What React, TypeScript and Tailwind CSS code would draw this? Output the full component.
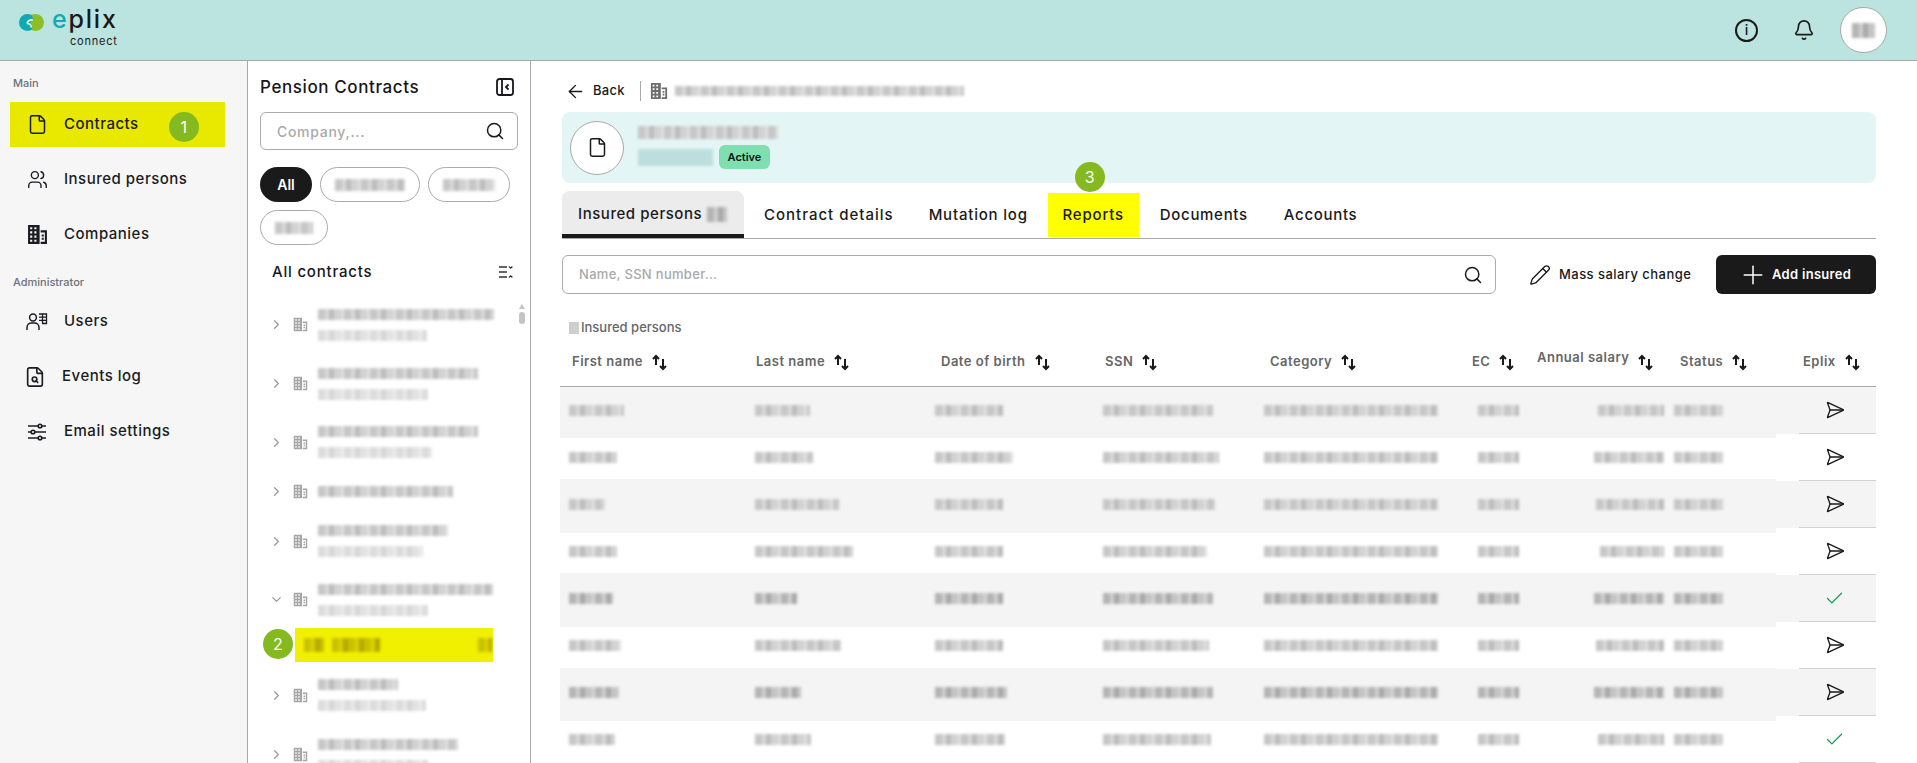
import {
  ArrowLeft,
  Bell,
  Check,
  ChevronDown,
  ChevronRight,
  File,
  FileSearch,
  Pencil,
  Plus,
  Search,
  SendHorizontal,
  Users,
} from "lucide-react";

const FONT = "font-['Inter','Noto_Sans',sans-serif]";

// the reference hides names and numbers behind a mosaic, these bars stand in for it
const MOSAIC =
  "bg-[repeating-linear-gradient(90deg,#c6c6c6_0_7px,#d9d9d9_7px_11px,#bcbcbc_11px_16px,#d2d2d2_16px_23px,#e0e0e0_23px_26px)]";
const MOSAIC_LIGHT =
  "bg-[repeating-linear-gradient(90deg,#dcdcdc_0_7px,#e8e8e8_7px_11px,#d6d6d6_11px_16px,#e2e2e2_16px_23px,#ededed_23px_26px)]";
const MOSAIC_DARK =
  "bg-[repeating-linear-gradient(90deg,#b4b4b4_0_7px,#cfcfcf_7px_11px,#a8a8a8_11px_16px,#c4c4c4_16px_23px,#d6d6d6_23px_26px)]";
const MOSAIC_YELLOW =
  "bg-[repeating-linear-gradient(90deg,#c9bf00_0_6px,#d8d000_6px_11px,#b5a900_11px_16px)]";

function Blur({ w, h = 11, color = MOSAIC }: { w: number; h?: number; color?: string }) {
  return <span className={`block blur-[1.5px] ${color}`} style={{ width: w, height: h }} />;
}

function Marker({ n }: { n: number }) {
  return (
    <span className="flex h-[30px] w-[30px] items-center justify-center rounded-full bg-[#84b91f] text-[16px] font-normal tracking-normal text-white">
      {n}
    </span>
  );
}

function BuildingIcon({ className }: { className?: string }) {
  return (
    <svg viewBox="0 0 20 20" className={className} fill="currentColor">
      <path
        fillRule="evenodd"
        d="M1 1h11v18H1V1zm2 2v2h2V3H3zm4 0v2h2V3H7zM3 7v2h2V7H3zm4 0v2h2V7H7zm-4 4v2h2v-2H3zm4 0v2h2v-2H7zm-4 4v2h2v-2H3zm4 0v2h2v-2H7zM13 6h6v13h-6v-2h4V8h-4V6zm1 4h2v2h-2v-2zm0 3h2v2h-2v-2z"
      />
    </svg>
  );
}

function UsersAdminIcon() {
  return (
    <svg viewBox="0 0 22 18" className="h-[19px] w-[22px]" fill="none" stroke="currentColor" strokeWidth="1.5">
      <circle cx="7" cy="5" r="3.4" />
      <path d="M1 17.5v-2.5c0-2.6 2-4.4 4.5-4.4h3c2.5 0 4.5 1.8 4.5 4.4v2.5" />
      <path d="M13 1.5h7.5V11H16M13 4.7h7.5M13 7.9h7.5M16.5 1.5V11" strokeWidth="1.3" />
    </svg>
  );
}

function SlidersIcon() {
  return (
    <svg viewBox="0 0 18 18" className="h-[18px] w-[18px]" fill="none" stroke="currentColor" strokeWidth="1.6">
      <path d="M0 3h18M0 9h18M0 15h18" />
      <circle cx="12" cy="3" r="1.8" fill="#f6f6f6" />
      <circle cx="5" cy="9" r="1.8" fill="#f6f6f6" />
      <circle cx="12" cy="15" r="1.8" fill="#f6f6f6" />
    </svg>
  );
}

function SortIcon() {
  return (
    <svg viewBox="0 0 17 17" className="h-[17px] w-[17px] shrink-0 text-[#1a1a1a]" fill="none" stroke="currentColor" strokeWidth="2">
      <path d="M5 11V2M2 5l3-3 3 3" />
      <path d="M12 5v10M9 12l3 3 3-3" />
    </svg>
  );
}

function NavLabel({ children, className }: { children: string; className?: string }) {
  return <div className={`h-4 pl-[13px] text-[11px] font-medium leading-4 text-[#6f7178] ${className}`}>{children}</div>;
}

function NavRow({
  icon,
  label,
  shifted,
  active,
}: {
  icon: React.ReactNode;
  label: string;
  shifted?: boolean;
  active?: boolean;
}) {
  return (
    <div className="flex h-[55px] items-center pl-[10px]">
      <div className={`flex h-[45px] w-[215px] items-center ${shifted ? "pl-[13px]" : "pl-[15px]"} ${active ? "bg-[#e9e900]" : ""}`}>
        <span className="flex w-[24px] justify-center text-[#1b1b22]">{icon}</span>
        <span className="ml-[15px] text-[15px] font-medium tracking-[0.5px] text-[#1b1b22]">{label}</span>
        {active && (
          <span className="ml-[30px] mt-[4px]">
            <Marker n={1} />
          </span>
        )}
      </div>
    </div>
  );
}

function Sidebar() {
  return (
    <aside className="w-[248px] shrink-0 border-r border-[#a8a8a8] bg-[#f6f6f6] pt-[14px]">
      <NavLabel className="mb-[6px]">Main</NavLabel>
      <NavRow active icon={<File className="h-[21px] w-[21px]" strokeWidth={1.7} />} label="Contracts" />
      <NavRow icon={<Users className="h-[21px] w-[21px]" strokeWidth={1.6} />} label="Insured persons" />
      <NavRow icon={<BuildingIcon className="h-[21px] w-[21px]" />} label="Companies" />
      <NavLabel className="mt-[12px] mb-[4px]">Administrator</NavLabel>
      <NavRow icon={<UsersAdminIcon />} label="Users" />
      <NavRow shifted icon={<FileSearch className="h-[22px] w-[22px]" strokeWidth={1.8} />} label="Events log" />
      <NavRow icon={<SlidersIcon />} label="Email settings" />
    </aside>
  );
}

const CONTRACTS = [
  { h: 59, a: 176, b: 109 },
  { h: 59, a: 160, b: 110 },
  { h: 58, a: 160, b: 114 },
  { h: 40, a: 135 },
  { h: 60, a: 130, b: 105 },
  { h: 57, a: 175, b: 110, open: true },
];

function ContractRow({ h, a, b, open }: { h: number; a: number; b?: number; open?: boolean }) {
  return (
    <div className="flex shrink-0 items-center" style={{ height: h }}>
      <span className="flex w-[33px] justify-center text-[#9a9a9a]">
        {open ? <ChevronDown className="h-[15px] w-[15px]" /> : <ChevronRight className="h-[15px] w-[15px]" />}
      </span>
      <BuildingIcon className="h-[15px] w-[15px] text-[#a6a6a6]" />
      <div className="ml-[10px] flex flex-col gap-[10px]">
        <Blur w={a} />
        {b && <Blur w={b} color={MOSAIC_LIGHT} />}
      </div>
    </div>
  );
}

function Chip({ w }: { w: number }) {
  return (
    <span className="flex h-[35px] items-center justify-center rounded-full border border-[#ababab] bg-white px-[14px]">
      <Blur w={w} h={12} />
    </span>
  );
}

function ContractsPanel() {
  return (
    <section className="relative w-[283px] shrink-0 overflow-hidden border-r border-[#a8a8a8] bg-white pl-[12px] pr-[12px] pt-[15px]">
      <div className="flex items-center justify-between pr-[4px]">
        <h2 className="text-[17px] font-medium leading-[22px] tracking-[0.6px] text-[#16161c]">Pension Contracts</h2>
        <svg viewBox="0 0 18 18" className="h-[18px] w-[18px] text-[#16161c]" fill="none" stroke="currentColor" strokeWidth="1.8">
          <rect x="1" y="1" width="16" height="16" rx="2.5" />
          <path d="M6 1v16M12.5 6.5L10 9l2.5 2.5" />
        </svg>
      </div>
      <div className="mt-[14px] flex h-[38px] items-center justify-between rounded-[6px] border border-[#ababab] pl-[16px] pr-[12px]">
        <span className="text-[14px] font-medium tracking-[0.7px] text-[#a9a9a9]">Company,...</span>
        <Search className="h-[20px] w-[20px] text-[#1a1a1a]" strokeWidth={1.8} />
      </div>
      <div className="mt-[17px] flex flex-wrap gap-x-[8px] gap-y-[8px]">
        <span className="flex h-[35px] w-[52px] items-center justify-center rounded-full bg-[#1a1a1a] text-[14px] font-semibold text-white">
          All
        </span>
        <Chip w={70} />
        <Chip w={52} />
        <Chip w={38} />
      </div>
      <div className="mt-[16px] flex h-[22px] items-center justify-between pl-[12px] pr-[4px]">
        <span className="text-[15px] font-medium tracking-[0.8px] text-[#16161c]">All contracts</span>
        <svg viewBox="0 0 16 14" className="h-[14px] w-[16px] text-[#333]" fill="none" stroke="currentColor" strokeWidth="1.3">
          <path d="M1 2h8M1 7h8M1 12h8M11 1.5l1.7 1.7 1.7-1.7M11 12.5l1.7-1.7 1.7 1.7" />
        </svg>
      </div>
      <div className="mt-[12px] flex flex-col">
        {CONTRACTS.map((c, i) => (
          <ContractRow key={i} {...c} />
        ))}
        <div className="relative ml-[35px] flex h-[34px] w-[198px] shrink-0 items-center bg-[#f0f000] pl-[9px]">
          <Blur w={20} h={14} color={MOSAIC_YELLOW} />
          <span className="ml-[8px]">
            <Blur w={48} h={14} color={MOSAIC_YELLOW} />
          </span>
          <span className="absolute right-[1px]">
            <Blur w={14} h={14} color={MOSAIC_YELLOW} />
          </span>
          <span className="absolute left-[-32px] top-[1px]">
            <Marker n={2} />
          </span>
        </div>
        <div className="h-[3px] shrink-0" />
        <ContractRow h={60} a={80} b={108} />
        <ContractRow h={59} a={140} b={110} />
      </div>
      <div className="absolute right-[5px] top-[243px] flex w-[7px] flex-col items-center gap-[3px]">
        <span className="h-0 w-0 border-x-[3.5px] border-b-[5px] border-x-transparent border-b-[#c4c4c4]" />
        <span className="h-[12px] w-[6px] rounded-full bg-[#c4c4c4]" />
      </div>
    </section>
  );
}

const COLS = "grid-cols-[186px_180px_168px_161px_185px_90px_140px_129px_77px]";

const HEADERS = [
  { label: "First name", pl: "pl-[12px]" },
  { label: "Last name", pl: "pl-[10px]" },
  { label: "Date of birth", pl: "pl-[15px]" },
  { label: "SSN", pl: "pl-[11px]" },
  { label: "Category", pl: "pl-[15px]" },
  { label: "EC", pl: "pl-[32px]" },
  { label: "Annual salary", pl: "pl-[7px]", raised: true },
  { label: "Status", pl: "pl-[10px]" },
  { label: "Eplix", pl: "pl-[4px]" },
];

const ROWS = [
  { first: 55, last: 55, dob: 68, ssn: 110, salary: 66, done: false },
  { first: 48, last: 58, dob: 78, ssn: 116, salary: 70, done: false },
  { first: 36, last: 84, dob: 68, ssn: 112, salary: 68, done: false },
  { first: 48, last: 98, dob: 68, ssn: 104, salary: 64, done: false },
  { first: 44, last: 42, dob: 68, ssn: 110, salary: 70, done: true },
  { first: 52, last: 86, dob: 68, ssn: 106, salary: 68, done: false },
  { first: 50, last: 46, dob: 72, ssn: 110, salary: 70, done: false },
  { first: 46, last: 56, dob: 70, ssn: 108, salary: 66, done: true },
];

const STRIPE_SHADOWS = [
  "shadow-[0_4px_0_#f4f4f4]",
  "",
  "shadow-[0_5px_0_#f4f4f4,0_-2px_0_#f4f4f4]",
  "",
  "shadow-[0_5px_0_#f4f4f4,0_-2px_0_#f4f4f4]",
  "",
  "shadow-[0_5px_0_#f4f4f4,0_-1px_0_#f4f4f4]",
  "",
];

function TableRow({ row, index }: { row: (typeof ROWS)[number]; index: number }) {
  const odd = index % 2 === 0;
  const tone = index === 4 || index === 6 ? MOSAIC_DARK : MOSAIC;
  return (
    <div className={`relative h-[47px] ${odd ? "bg-[#f4f4f4]" : ""}`}>
      <div className={`absolute inset-y-0 left-0 w-[1216px] ${odd ? "bg-[#f4f4f4]" : ""} ${STRIPE_SHADOWS[index]}`} />
      <div className={`relative grid h-full items-center ${COLS}`}>
        <div className="pl-[9px]">
          <Blur w={row.first} color={tone} />
        </div>
        <div className="pl-[9px]">
          <Blur w={row.last} color={tone} />
        </div>
        <div className="pl-[9px]">
          <Blur w={row.dob} color={tone} />
        </div>
        <div className="pl-[9px]">
          <Blur w={row.ssn} color={tone} />
        </div>
        <div className="pl-[9px]">
          <Blur w={174} color={tone} />
        </div>
        <div className="pl-[38px]">
          <Blur w={41} color={tone} />
        </div>
        <div className="flex justify-end pr-[6px]">
          <Blur w={row.salary} color={tone} />
        </div>
        <div className="pl-[4px]">
          <Blur w={49} color={tone} />
        </div>
        <div className="flex h-full items-center justify-center border-b border-[#d0d0d0] pr-[6px]">
          {row.done ? (
            <Check className="h-[21px] w-[21px] text-[#10a05a]" strokeWidth={1.5} />
          ) : (
            <SendHorizontal className="h-[20px] w-[20px] text-[#1a1a1a]" strokeWidth={1.6} />
          )}
        </div>
      </div>
    </div>
  );
}

function MainPanel() {
  return (
    <main className="min-w-0 flex-1 pl-[31px] pr-[41px]">
      <div className="flex h-[51px] items-center pl-[3px] pt-[9px]">
        <ArrowLeft className="h-[21px] w-[21px] text-[#1a1a1a]" strokeWidth={1.6} />
        <span className="ml-[7px] text-[13px] font-medium tracking-[0.3px] text-[#1a1a1a]">Back</span>
        <span className="ml-[15px] h-[20px] w-px bg-[#a8a8a8]" />
        <BuildingIcon className="ml-[9px] h-[18px] w-[18px] text-[#6d6d6d]" />
        <span className="ml-[7px]">
          <Blur w={289} h={10} />
        </span>
      </div>
      <div className="flex h-[71px] items-center rounded-[8px] bg-[#e3f6f5] pl-[8px]">
        <span className="flex h-[54px] w-[54px] items-center justify-center rounded-full border border-[#a8a8a8] bg-white">
          <File className="h-[21px] w-[21px] text-[#1a1a1a]" strokeWidth={1.7} />
        </span>
        <div className="ml-[14px] flex flex-col gap-[6px]">
          <Blur w={140} h={13} />
          <div className="flex items-center gap-[6px]">
            <Blur w={75} h={17} color="bg-[#bcdedc]" />
            <span className="flex h-[24px] w-[51px] items-center justify-center rounded-[6px] bg-[#7fdfb0] text-[11px] font-semibold text-[#111]">
              Active
            </span>
          </div>
        </div>
      </div>
      <div className="mt-[8px] flex h-[48px] items-stretch border-b border-[#a8a8a8] text-[15px] font-medium tracking-[0.8px] text-[#1a1a1a]">
        <div className="flex h-[47px] w-[182px] items-center rounded-t-[8px] border-b-4 border-[#1a1a1a] bg-[#ececec] pl-[16px] pt-[4px] tracking-[0.55px]">
          Insured persons
          <span className="ml-[5px]">
            <Blur w={20} h={15} color={MOSAIC_DARK} />
          </span>
        </div>
        <div className="ml-[20px] flex items-center gap-[35px] pt-[2px]">
          <span className="tracking-[1px]">Contract details</span>
          <span>Mutation log</span>
        </div>
        <div className="relative ml-[20px] mt-[2px] flex h-[44px] w-[91px] items-center justify-center bg-[#ffff00]">
          Reports
          <span className="absolute left-[27px] top-[-31px]">
            <Marker n={3} />
          </span>
        </div>
        <div className="ml-[21px] flex items-center gap-[36px] pt-[2px] tracking-[0.7px]">
          <span>Documents</span>
          <span>Accounts</span>
        </div>
      </div>
      <div className="mt-[16px] flex h-[39px] items-center">
        <div className="flex h-full w-[934px] items-center justify-between rounded-[6px] border border-[#ababab] pl-[16px] pr-[12px]">
          <span className="text-[13px] font-medium tracking-[0.3px] text-[#a9a9a9]">Name, SSN number...</span>
          <Search className="h-[20px] w-[20px] text-[#1a1a1a]" strokeWidth={1.8} />
        </div>
        <Pencil className="ml-[33px] h-[22px] w-[22px] text-[#1a1a1a]" strokeWidth={1.5} />
        <span className="ml-[8px] text-[13px] font-medium tracking-[0.45px] text-[#1a1a1a]">Mass salary change</span>
        <button className="ml-auto flex h-full w-[160px] items-center rounded-[6px] bg-[#1a1a1a] pl-[22px] text-[13px] font-semibold tracking-[0.3px] text-white">
          <Plus className="h-[30px] w-[30px]" strokeWidth={1.2} />
          <span className="ml-[4px]">Add insured</span>
        </button>
      </div>
      <div className="mt-[26px] flex h-[16px] items-center pl-[7px] text-[13px] font-medium text-[#666]">
        <span className="mr-[2px] h-[12px] w-[10px] bg-[#cfcfcf]" />
        Insured persons
      </div>
      <div className="ml-[-2px]">
        <div className={`grid h-[51px] items-center border-b border-[#a8a8a8] pt-[2px] ${COLS}`}>
          {HEADERS.map((h) => (
            <div key={h.label} className={`flex items-center gap-[8px] ${h.pl}`}>
              <span
                className={`whitespace-nowrap text-[13px] font-semibold tracking-[0.5px] text-[#666] ${h.raised ? "mt-[-8px]" : ""}`}
              >
                {h.label}
              </span>
              <SortIcon />
            </div>
          ))}
        </div>
        {ROWS.map((row, i) => (
          <TableRow key={i} row={row} index={i} />
        ))}
      </div>
    </main>
  );
}

export default function App() {
  return (
    <div className={`flex h-screen flex-col overflow-hidden bg-white ${FONT}`}>
      <header className="flex h-[61px] shrink-0 items-center border-b border-[#a8a8a8] bg-[#bbe3e0] pl-[19px] pr-[30px]">
        <svg viewBox="0 0 25 17" className="mb-[16px] h-[17px] w-[25px]">
          <circle cx="8.5" cy="8.5" r="8.5" fill="#0fa9b4" />
          <circle cx="16.5" cy="8.5" r="8.5" fill="#8cbf26" />
          <path d="M12.5 1a8.5 8.5 0 0 0 0 15c2-2 .5-5-2-5.5 1-3 3-4 4-4.5-.5-2-1-3.500-2-5z" fill="#0fa9b4" />
          <path d="M8 9.500c1-3 3-4 6-3.500M8 9.500c2 0 4 1 4.500 4" stroke="#eaf5d8" strokeWidth="1.600" fill="none" />
        </svg>
        <div className="mb-[6px] ml-[8px] flex flex-col items-end leading-none">
          <span className="h-[24px] text-[25px] font-medium leading-[24px] tracking-[1.8px] text-[#1a1a1a]">
            <span className="text-[#11aab5]">e</span>plix
          </span>
          <span className="mt-[4px] h-[12px] text-[11px] leading-[12px] tracking-[0.8px] text-[#1a1a1a]">connect</span>
        </div>
        <span className="ml-auto flex h-[23px] w-[23px] items-center justify-center rounded-full border-2 border-[#1a1a1a] text-[14px] font-medium leading-none text-[#1a1a1a]">
          i
        </span>
        <Bell className="ml-[35px] h-[22px] w-[22px] text-[#1a1a1a]" strokeWidth={1.8} />
        <span className="ml-[25px] flex h-[46px] w-[47px] items-center justify-center rounded-full border border-[#a8a8a8] bg-white">
          <Blur w={23} h={15} color={MOSAIC_DARK} />
        </span>
      </header>
      <div className="flex min-h-0 flex-1">
        <Sidebar />
        <ContractsPanel />
        <MainPanel />
      </div>
    </div>
  );
}
